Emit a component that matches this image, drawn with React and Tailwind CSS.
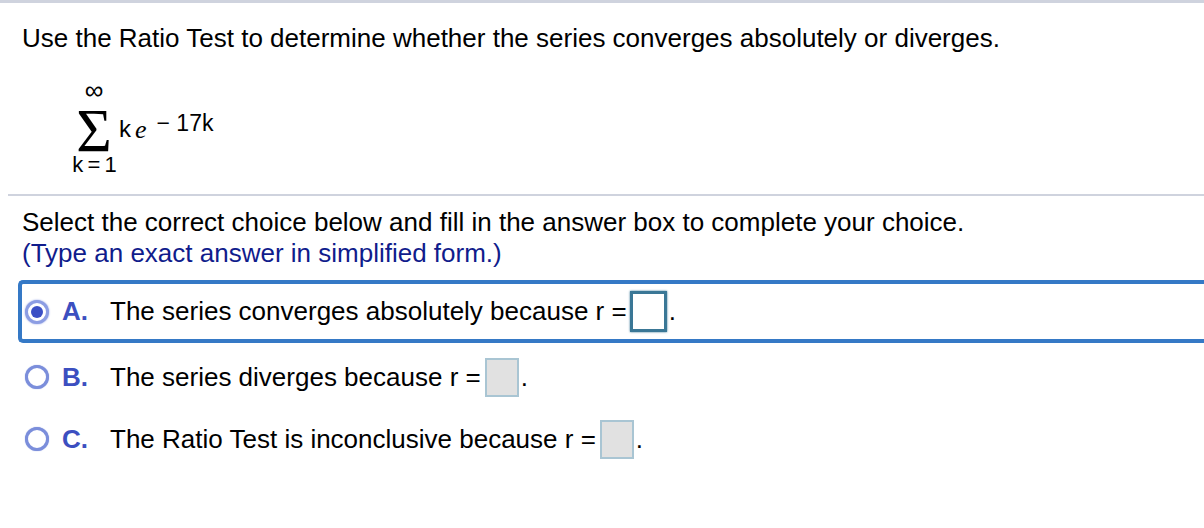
export default function App() {
  const radio = (checked) => (
    <span
      className={`flex h-[24px] w-[24px] shrink-0 items-center justify-center rounded-full border-[3px] bg-white ${
        checked ? "border-[#8c9de3] shadow-[0_0_2px_#8c9de3]" : "border-[#7b8edb] shadow-[0_0_1px_#7b8edb]"
      }`}
    >
      {checked && <span className="h-[12px] w-[12px] rounded-full bg-[#3b4fc5]" />}
    </span>
  );

  const emptyBox = (
    <span className="ml-[4px] h-[39px] w-[34px] shrink-0 border-[2px] border-[#a9c5d3] bg-[#e1e1e1]" />
  );

  return (
    <div className="h-[528px] w-[1204px] overflow-hidden bg-white text-black font-['Liberation_Sans',Arial,sans-serif]">
      <div className="h-[3px] w-full bg-[#cfd3de]" />

      <div className="pl-[22px] pt-[20px] text-[26px] leading-[30px]">
        Use the Ratio Test to determine whether the series converges absolutely or diverges.
      </div>

      {/* summation */}
      <div className="mt-[27px] flex h-[114px] items-start pl-[71px]">
        <div className="flex w-[46px] flex-col items-center">
          <span className="mt-[2px] text-[26px] leading-[16px]">∞</span>
          <span className="mt-[13px] font-['Liberation_Serif',serif] text-[61px] leading-[40px]">Σ</span>
          <span className="mt-[2px] whitespace-nowrap text-[22px] leading-[24px] tracking-[-1px]">k = 1</span>
        </div>
        <div className="ml-[2px] mt-[37px] flex items-start">
          <span className="text-[24px] leading-[24px]">k</span>
          <span className="ml-[4px] mt-[1px] font-['Liberation_Serif',serif] text-[26px] italic leading-[24px]">e</span>
          <span className="-mt-[6px] ml-[10px] whitespace-nowrap text-[23px] leading-[24px]">− 17k</span>
        </div>
      </div>

      <div className="ml-[8px] h-[2px] bg-[#cfd3de]" />

      <div className="pl-[22px] pt-[11px] text-[26px] leading-[31px]">
        <div>Select the correct choice below and fill in the answer box to complete your choice.</div>
        <div className="text-[#101c8c]">(Type an exact answer in simplified form.)</div>
      </div>

      <div className="ml-[18px] mt-[11px] flex h-[63px] items-center rounded-l-[5px] border-y-[4px] border-l-[4px] border-[#3579c6] pl-[3px] text-[26px]">
        {radio(true)}
        <span className="ml-[13px] font-bold text-[#3c4fc0]">A.</span>
        <span className="ml-[22px] whitespace-nowrap">The series converges absolutely because r =</span>
        <span className="ml-[3px] h-[41px] w-[37px] shrink-0 border-[3px] border-[#3a7796] bg-white shadow-[0_0_2px_#3a7796]" />
        <span className="ml-[2px]">.</span>
      </div>

      <div className="ml-[25px] mt-[14px] flex h-[40px] items-center text-[26px]">
        {radio(false)}
        <span className="ml-[13px] font-bold text-[#3c4fc0]">B.</span>
        <span className="ml-[22px] whitespace-nowrap">The series diverges because r =</span>
        {emptyBox}
        <span className="ml-[2px]">.</span>
      </div>

      <div className="ml-[25px] mt-[22px] flex h-[40px] items-center text-[26px]">
        {radio(false)}
        <span className="ml-[13px] font-bold text-[#3c4fc0]">C.</span>
        <span className="ml-[22px] whitespace-nowrap">The Ratio Test is inconclusive because r =</span>
        {emptyBox}
        <span className="ml-[2px]">.</span>
      </div>
    </div>
  );
}
